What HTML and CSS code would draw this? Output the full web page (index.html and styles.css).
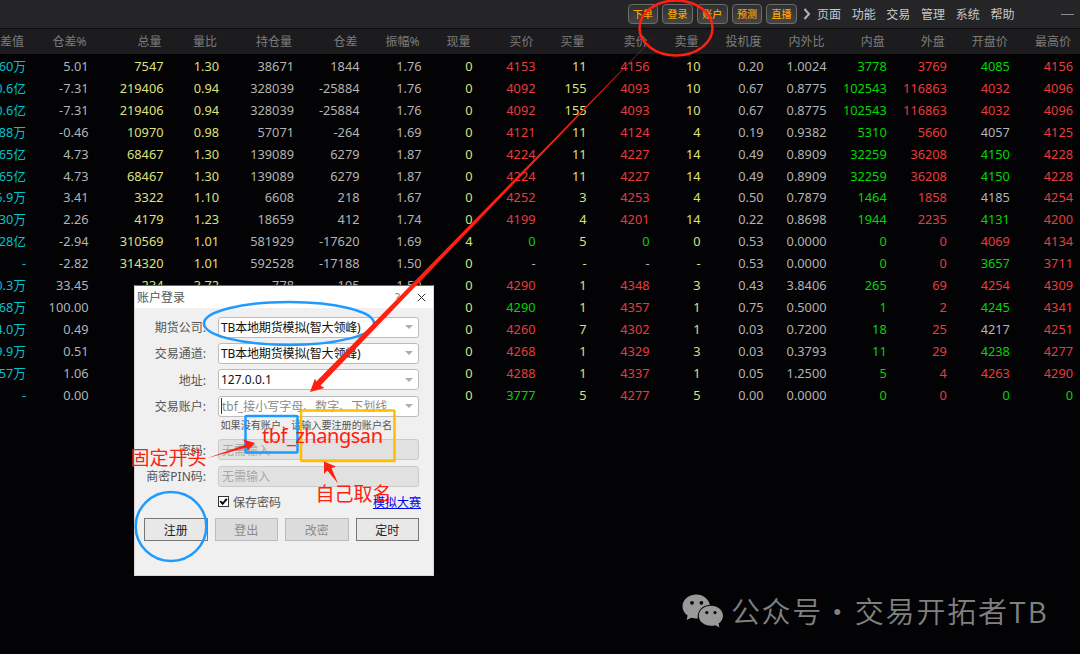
FILE: index.html
```html
<!DOCTYPE html>
<html lang="zh-CN">
<head>
    <meta charset="UTF-8">
    <meta name="viewport" content="width=device-width, initial-scale=1.0">
    <title>账户登录</title>
    <link rel="stylesheet" href="styles.css">
</head>
<body>
    <header class="topbar">
        <div class="tools">
            <button>下单</button>
            <button>登录</button>
            <button>账户</button>
            <button>预测</button>
            <button>直播</button>
        </div>
        <svg class="chevron" width="8" height="12" viewBox="0 0 8 12"><path d="M1.5 1 L6 6 L1.5 11" fill="none" stroke="#b4b4b4" stroke-width="2"/></svg>
        <nav class="menu">
            <span>页面</span>
            <span>功能</span>
            <span>交易</span>
            <span>管理</span>
            <span>系统</span>
            <span>帮助</span>
        </nav>
        <div class="minimize"></div>
    </header>

    <table class="quotes">
        <colgroup>
            <col class="w-value"><col class="w-pct"><col class="w-total"><col class="w-ratio"><col class="w-open-int"><col class="w-diff">
            <col class="w-swing"><col class="w-vol"><col class="w-price"><col class="w-vol"><col class="w-price"><col class="w-vol">
            <col class="w-price"><col class="w-price"><col class="w-disk"><col class="w-disk"><col class="w-price"><col class="w-price">
        </colgroup>
        <thead>
            <tr>
                <th>仓差值</th><th>仓差%</th><th>总量</th><th>量比</th><th>持仓量</th><th>仓差</th>
                <th>振幅%</th><th>现量</th><th>买价</th><th>买量</th><th>卖价</th><th>卖量</th>
                <th>投机度</th><th>内外比</th><th>内盘</th><th>外盘</th><th>开盘价</th><th>最高价</th>
            </tr>
        </thead>
        <tbody id="rows"></tbody>
    </table>

    <div class="dialog">
        <div class="dialog-title">
            <span>账户登录</span>
            <span class="help">?</span>
            <svg width="9" height="9" viewBox="0 0 9 9"><path d="M.8 .8 L8.2 8.2 M8.2 .8 L.8 8.2" stroke="#333" stroke-width="1"/></svg>
        </div>
        <div class="form">
            <div class="form-row"><label>期货公司:</label><div class="field combo cjk">TB本地期货模拟(智大领峰)</div></div>
            <div class="form-row"><label>交易通道:</label><div class="field combo cjk">TB本地期货模拟(智大领峰)</div></div>
            <div class="form-row"><label>地址:</label><div class="field combo">127.0.0.1</div></div>
            <div class="form-row"><label>交易账户:</label><div class="field combo placeholder"><i class="caret"></i>tbf_接小写字母、数字、下划线</div></div>
            <div class="hint">如果没有账户，请输入要注册的账户名</div>
            <div class="form-row"><label>密码:</label><div class="field disabled">无需输入</div></div>
            <div class="form-row"><label>商密PIN码:</label><div class="field disabled">无需输入</div></div>
        </div>
        <div class="options">
            <svg width="11" height="11" viewBox="0 0 11 11"><rect x=".5" y=".5" width="10" height="10" fill="#fff" stroke="#333"/><path d="M2.3 5.2 L4.6 7.8 L8.8 2.8" fill="none" stroke="#000" stroke-width="2"/></svg>
            <span>保存密码</span>
            <a href="#">模拟大赛</a>
        </div>
        <div class="actions">
            <button>注册</button>
            <button disabled>登出</button>
            <button disabled>改密</button>
            <button>定时</button>
        </div>
    </div>

    <div class="watermark">
        <svg width="42" height="34" viewBox="0 0 42 34">
            <path fill="#999" d="M14.5 .5 C6.5 .5 .5 5.8 .5 12.5 C.5 16.2 2.4 19.4 5.6 21.6 L4.6 26 L9.4 23.8 C11 24.3 12.7 24.5 14.5 24.5 L15.8 24.4 C15 17 20 11.3 28 10.8 C26.6 4.8 21 .5 14.5 .5 Z"/>
            <path fill="#999" d="M29 11.8 C21.8 11.8 16.8 16.4 16.8 21.8 C16.8 27.4 22 31.8 29 31.8 C30.6 31.8 32 31.6 33.4 31.2 L37.4 33.4 L36.6 29.6 C39.4 27.6 41 25 41 21.8 C41 16.4 36 11.8 29 11.8 Z"/>
            <g fill="#050406"><circle cx="10" cy="8.8" r="1.9"/><circle cx="19.4" cy="8.8" r="1.9"/><circle cx="24.8" cy="18.6" r="1.6"/><circle cx="33" cy="18.6" r="1.6"/></g>
        </svg>
        <span class="kind">公众号</span>
        <span class="dot">·</span>
        <span class="account">交易开拓者<b>TB</b></span>
    </div>

    <svg class="notes" width="1080" height="654" viewBox="0 0 1080 654">
        <g fill="none" stroke="#1e9bff" stroke-width="2.5">
            <ellipse cx="289" cy="323.4" rx="85" ry="21.5"/>
            <ellipse cx="171" cy="526.5" rx="35.3" ry="34.5"/>
            <rect x="245.5" y="416" width="52" height="36.5" rx="1"/>
        </g>
        <rect x="301" y="410.5" width="93.5" height="50.5" rx="1" fill="none" stroke="#ffbe00" stroke-width="2.5"/>
        <ellipse cx="676" cy="28" rx="36.5" ry="27.5" fill="none" stroke="#ff2010" stroke-width="2.5"/>
        <g fill="#ff2010">
            <path d="M660 31 L316.3 381.4 L315 378.5 L310 392 L324.5 388 L320.5 385.6 Z"/>
            <path d="M207.5 458 L246 444.5 L243 439.5 L255 443 L247.5 451 L247 447.5 Z"/>
            <path d="M338 483.5 L327.3 470.5 L324 474 L324 461.5 L336 466.5 L331.5 468.3 Z"/>
            <text x="130.5" y="464.5" font-size="19">固定开头</text>
            <text x="262" y="443" font-size="20" textLength="121">tbf_zhangsan</text>
            <text x="315.5" y="500.5" font-size="19">自己取名</text>
        </g>
    </svg>

    <script>
        // c cyan, w grey, y yellow, r red, g green
        const colors = ['c', 'w', 'y', 'y', 'w', 'w', 'w', 'y', 'r', 'y', 'r', 'y', 'w', 'w', 'g', 'r', 'r', 'r'];

        // a trailing letter overrides the column colour
        const data = [
            '60万|5.01|7547|1.30|38671|1844|1.76|0|4153|11|4156|10|0.20|1.0024|3778|3769|4085g|4156',
            '0.6亿|-7.31|219406|0.94|328039|-25884|1.76|0|4092|155|4093|10|0.67|0.8775|102543|116863|4032|4096',
            '0.6亿|-7.31|219406|0.94|328039|-25884|1.76|0|4092|155|4093|10|0.67|0.8775|102543|116863|4032|4096',
            '88万|-0.46|10970|0.98|57071|-264|1.69|0|4121|11|4124|4|0.19|0.9382|5310|5660|4057w|4125',
            '65亿|4.73|68467|1.30|139089|6279|1.87|0|4224|11|4227|14|0.49|0.8909|32259|36208|4150g|4228',
            '65亿|4.73|68467|1.30|139089|6279|1.87|0|4224|11|4227|14|0.49|0.8909|32259|36208|4150g|4228',
            '5.9万|3.41|3322|1.10|6608|218|1.67|0|4252|3|4253|4|0.50|0.7879|1464|1858|4185w|4254',
            '30万|2.26|4179|1.23|18659|412|1.74|0|4199|4|4201|14|0.22|0.8698|1944|2235|4131g|4200',
            '28亿|-2.94|310569|1.01|581929|-17620|1.69|4|0g|5|0g|0|0.53|0.0000|0|0|4069|4134',
            '-|-2.82|314320|1.01|592528|-17188|1.50|0|-w|-|-w|-|0.53|0.0000|0|0|3657g|3711',
            '0.3万|33.45|234|3.72|778|195|1.50|0|4290|1|4348|3|0.43|3.8406|265|69|4254|4309',
            '68万|100.00||||||0|4290g|1|4357|1|0.75|0.5000|1|2|4245g|4341',
            '4.0万|0.49||||||0|4260|7|4302|1|0.03|0.7200|18|25|4217w|4251',
            '9.9万|0.51||||||0|4268|1|4329|3|0.03|0.3793|11|29|4238g|4277',
            '57万|1.06||||||0|4288|1|4337|1|0.05|1.2500|5|4|4263|4290',
            '-|0.00||||||0|3777g|5|4277|5|0.00|0.0000|0|0|0g|0g'
        ];

        const tbody = document.getElementById('rows');
        data.forEach(function(line) {
            const tr = document.createElement('tr');
            line.split('|').forEach(function(value, i) {
                const td = document.createElement('td');
                const override = value.match(/[wg]$/);
                td.className = override ? override[0] : colors[i];
                td.textContent = value.replace(/[wg]$/, '');
                tr.appendChild(td);
            });
            tbody.appendChild(tr);
        });
    </script>
</body>
</html>
```

FILE: styles.css
```css
* {
    box-sizing: border-box;
}
body {
    margin: 0;
    width: 1080px;
    height: 654px;
    position: relative;
    overflow: hidden;
    background: #030205;
    color: #b4b4b4;
    font-family: "Noto Sans", "Noto Sans CJK SC", sans-serif;
    font-size: 12px;
}
button {
    font-family: inherit;
    padding: 0;
}
.topbar {
    height: 29px;
    padding: 0 6px 0 627.5px;
    display: flex;
    align-items: center;
    background: #252527;
    border-bottom: 1px solid #0c0c0e;
}
.tools {
    display: flex;
    gap: 4px;
}
.tools button {
    width: 30.7px;
    height: 20px;
    border: 1px solid #6c6c6c;
    border-radius: 4px;
    background: linear-gradient(#303030, #454545);
    color: #f5a500;
    font-size: 10px;
    font-weight: 500;
    line-height: 18px;
}
.chevron {
    margin-left: 6px;
}
.menu {
    display: flex;
    gap: 10.7px;
    margin-left: 6px;
    color: #c8c8c8;
}
.minimize {
    width: 13px;
    height: 1px;
    margin-left: auto;
    background: #8c8c8c;
}

/* quote table, first column is scrolled half out on the left */
.quotes {
    width: 1113px;
    margin-left: -40px;
    table-layout: fixed;
    border-collapse: collapse;
}
.w-value { width: 66px; }
.w-pct { width: 62.5px; }
.w-total { width: 75px; }
.w-ratio { width: 55.5px; }
.w-open-int { width: 75px; }
.w-diff { width: 65.5px; }
.w-swing { width: 62px; }
.w-vol { width: 51px; }
.w-price { width: 63px; }
.w-disk { width: 60.2px; }
.quotes thead {
    background: #1c1c1e;
    box-shadow: 40px 0 #1c1c1e;
}
.quotes th {
    height: 25px;
    padding: 1px 2px 0 0;
    color: #7d7d7d;
    font-weight: normal;
    line-height: 24px;
    text-align: right;
    white-space: nowrap;
}
.quotes td {
    height: 21.9px;
    padding: 0;
    font-size: 12.75px;
    line-height: 21.9px;
    text-align: right;
    white-space: nowrap;
}
.quotes tbody::before {
    content: "";
    display: block;
    height: 2px;
}
.c { color: #00c3cc; }
.w { color: #b4b4b4; }
.y { color: #dfe07c; }
.r { color: #e83c3c; }
.g { color: #00d800; }

/* login window */
.dialog {
    position: absolute;
    left: 134px;
    top: 285px;
    width: 300px;
    height: 291px;
    background: #f0f0f0;
    border: 1px solid #d8d8d8;
    border-top-color: #2878be;
    color: #555;
}
.dialog-title {
    height: 22px;
    padding: 0 7px 0 2px;
    display: flex;
    align-items: center;
    background: #fff;
}
.dialog-title .help {
    margin-left: auto;
    margin-right: 17px;
    color: #888;
}
.form {
    display: flex;
    flex-direction: column;
    gap: 5.4px;
    padding: 8.5px 14px 0 0;
}
.form-row {
    display: flex;
    align-items: center;
    height: 21px;
}
.form-row label {
    width: 71px;
    margin-right: 12px;
    text-align: right;
}
.field {
    flex: 1;
    height: 21px;
    padding-left: 2px;
    display: flex;
    align-items: center;
    background: #fff;
    border: 1px solid #bcbcbc;
    border-radius: 3px;
    color: #111;
    white-space: nowrap;
}
.combo::after {
    content: "";
    margin-left: auto;
    margin-right: 5px;
    border: 4px solid transparent;
    border-top-color: #adadad;
    border-bottom: 0;
}
.cjk {
    letter-spacing: -0.15px;
}
.placeholder {
    color: #8a8a8a;
}
.caret {
    width: 1px;
    height: 16px;
    background: #333;
}
.field.disabled {
    padding-left: 3px;
    background: #e1e1e1;
    border-color: #cacaca;
    color: #a8a8a8;
}
.hint {
    height: 12px;
    margin: -3px 0 3px;
    padding-left: 85.5px;
    font-size: 10.1px;
    line-height: 12px;
    white-space: nowrap;
}
.options {
    display: flex;
    align-items: center;
    height: 18px;
    margin-top: 6px;
    padding: 0 12px 0 83px;
}
.options span {
    margin-left: 4px;
}
.options a {
    margin-left: auto;
    color: #0000ee;
}
.actions {
    display: flex;
    gap: 7px;
    margin-top: 7.5px;
    padding-left: 9px;
}
.actions button {
    width: 63.5px;
    height: 23px;
    border: 1px solid #777;
    background: #e8e8e8;
    color: #222;
    font-size: 12px;
}
.actions button:disabled {
    border-color: #bcbcbc;
    background: #dcdcdc;
    color: #8c8c8c;
}

.watermark {
    position: absolute;
    left: 682px;
    top: 589px;
    height: 42px;
    display: flex;
    align-items: center;
    color: #808080;
    font-family: "Noto Sans CJK SC", sans-serif;
    font-size: 29px;
    font-weight: 350;
    white-space: nowrap;
}
.watermark svg {
    margin-top: 1px;
}
.watermark .kind {
    margin-left: 7px;
    letter-spacing: 1.6px;
}
.watermark .dot {
    width: 28px;
    margin-right: 4px;
    text-align: center;
}
.watermark .account {
    letter-spacing: 1.8px;
}
.watermark b {
    font-weight: 350;
}

/* pen marks over the whole screen */
.notes {
    position: absolute;
    left: 0;
    top: 0;
    pointer-events: none;
}
```
